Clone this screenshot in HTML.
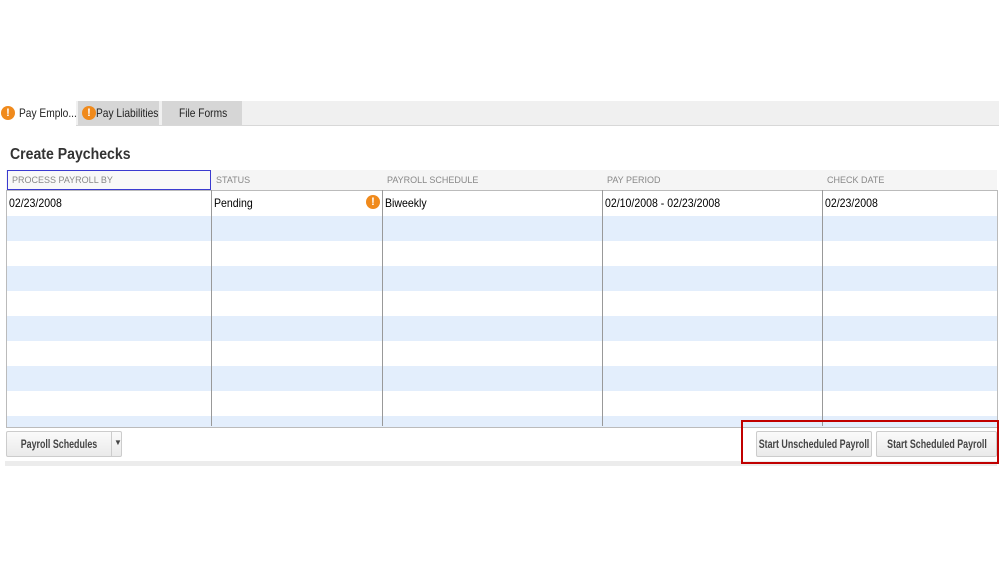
<!DOCTYPE html><html><head><style>
body{margin:0;width:999px;height:562px;background:#fff;font-family:"Liberation Sans",sans-serif;position:relative;overflow:hidden}
.a{position:absolute}
.tabbar{left:0;top:101px;width:999px;height:24px;background:#f0f0f0;border-bottom:1px solid #d8d8d8}
.tab{top:101px;height:24px;font-size:12px;line-height:24px;transform:scaleX(.85);transform-origin:left;white-space:nowrap;color:#222}
.ex{display:inline-block;width:14px;height:14px;border-radius:50%;background:#f08a1c;color:#fff;font-size:11px;font-weight:bold;text-align:center;line-height:14px}
.hdr{top:171px;height:18px;font-size:9px;color:#888;line-height:18px}
.grid{left:6px;top:190px;width:990px;height:236px;border:1px solid #bbb;background:repeating-linear-gradient(#fff 0 25px,#e3eefc 25px 50px)}
.vl{top:190px;width:1px;height:236px;background:#999}
.cell{top:196px;font-size:12px;transform:scaleX(.88);transform-origin:left;white-space:nowrap}
.btn{border:1px solid #ccc;border-radius:2px;background:linear-gradient(#fafafa,#eaeaea);color:#444;height:24px;overflow:hidden}
.btn span.t{position:absolute;top:0;left:50%;line-height:24px;font-size:12px;font-weight:bold;white-space:nowrap;transform:translateX(-50%) scaleX(.74)}
</style></head><body>
<div class="a tabbar"></div>
<div class="a" style="left:0;top:101px;width:76px;height:25px;background:#fff"></div>
<div class="a" style="left:78px;top:101px;width:81px;height:24px;background:#d6d6d6"></div>
<div class="a" style="left:162px;top:101px;width:80px;height:24px;background:#d6d6d6"></div>
<span class="a ex" style="left:1px;top:106px">!</span>
<span class="a ex" style="left:82px;top:106px">!</span>
<div class="a tab" style="left:19px">Pay Emplo...</div>
<div class="a tab" style="left:96px">Pay Liabilities</div>
<div class="a tab" style="left:179px">File Forms</div>
<div class="a" style="left:10px;top:146px;font-size:16px;font-weight:bold;color:#333;transform:scaleX(.88);transform-origin:left;white-space:nowrap">Create Paychecks</div>
<div class="a" style="left:6px;top:170px;width:991px;height:20px;background:#f5f5f5"></div>
<div class="a" style="left:7px;top:170px;width:202px;height:18px;border:1px solid #3a3ad0;background:#f8f8f8"></div>
<div class="a hdr" style="left:12px">PROCESS PAYROLL BY</div>
<div class="a hdr" style="left:216px">STATUS</div>
<div class="a hdr" style="left:387px">PAYROLL SCHEDULE</div>
<div class="a hdr" style="left:607px">PAY PERIOD</div>
<div class="a hdr" style="left:827px">CHECK DATE</div>
<div class="a grid"></div>
<div class="a vl" style="left:211px"></div><div class="a vl" style="left:382px"></div>
<div class="a vl" style="left:602px"></div><div class="a vl" style="left:822px"></div>
<div class="a cell" style="left:9px">02/23/2008</div>
<div class="a cell" style="left:214px">Pending</div>
<span class="a ex" style="left:366px;top:195px">!</span>
<div class="a cell" style="left:385px">Biweekly</div>
<div class="a cell" style="left:605px">02/10/2008 - 02/23/2008</div>
<div class="a cell" style="left:825px">02/23/2008</div>
<div class="a" style="left:5px;top:461px;width:992px;height:5px;background:#ececec"></div>
<div class="a btn" style="left:6px;top:431px;width:114px"><span class="t" style="left:52px">Payroll Schedules</span><span style="position:absolute;left:104px;top:0;width:1px;height:24px;background:#ccc"></span><span style="position:absolute;left:107px;top:6px;font-size:8px">▼</span></div>
<div class="a" style="left:741px;top:420px;width:254px;height:40px;border:2px solid #c00000"></div>
<div class="a btn" style="left:756px;top:431px;width:114px"><span class="t">Start Unscheduled Payroll</span></div>
<div class="a btn" style="left:876px;top:431px;width:119px"><span class="t">Start Scheduled Payroll</span></div>
</body></html>
